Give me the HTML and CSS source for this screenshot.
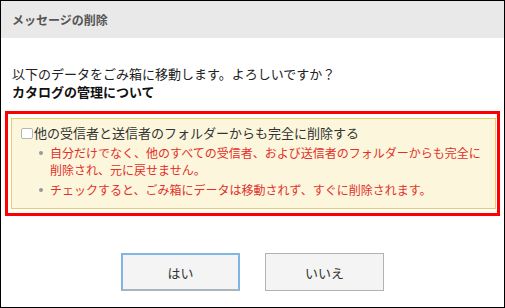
FILE: index.html
```html
<!DOCTYPE html>
<html lang="ja">
<head>
<meta charset="utf-8">
<title>メッセージの削除</title>
<link rel="stylesheet" href="styles.css">
</head>
<body>
<div class="dialog">
  <div class="header">メッセージの削除</div>
  <div class="content">
    <p class="msg">以下のデータをごみ箱に移動します。よろしいですか？<br><b>カタログの管理について</b></p>
    <div class="warn-frame">
      <div class="warn">
        <label class="check"><span class="box"></span>他の受信者と送信者のフォルダーからも完全に削除する</label>
        <ul class="notes">
          <li>自分だけでなく、他のすべての受信者、および送信者のフォルダーからも完全に削除され、元に戻せません。</li>
          <li>チェックすると、ごみ箱にデータは移動されず、すぐに削除されます。</li>
        </ul>
      </div>
    </div>
  </div>
  <div class="actions">
    <button class="btn btn-focus">はい</button>
    <button class="btn">いいえ</button>
  </div>
</div>
</body>
</html>
```
FILE: styles.css
```css
html, body {
  margin: 0;
  padding: 0;
  background: #fff;
}
body {
  font-family: "Noto Sans CJK JP", "Noto Sans", sans-serif;
  color: #333;
}
.dialog {
  box-sizing: border-box;
  width: 505px;
  height: 308px;
  border: 1px solid #000;
  display: flex;
  flex-direction: column;
}
.header {
  height: 37px;
  background: #e9e9e9;
  color: #555;
  font-size: 12px;
  font-weight: bold;
  line-height: 37px;
  padding-left: 11px;
}
.content {
  padding-top: 27px;
}
.msg {
  margin: 0 0 10px 11px;
  font-size: 13px;
  line-height: 18px;
  color: #222;
}
.msg b {
  color: #111;
}
.warn-frame {
  margin: 0 4px;
  border: 3px solid #ff0000;
  padding: 4px 1px 4px 3px;
}
.warn {
  background: #fcf7dc;
  border: 1px solid #e4cd6a;
  padding: 5px 0 10px 0;
}
.check {
  display: flex;
  align-items: center;
  padding-left: 9px;
  font-size: 13px;
  line-height: 18px;
  color: #333;
}
.box {
  flex: none;
  box-sizing: border-box;
  width: 12px;
  height: 11px;
  border: 1px solid #b5b5b5;
  border-radius: 2px;
  background: #fff;
  margin-right: 1px;
  margin-top: 1px;
}
.notes {
  list-style: none;
  margin: 2px 0 0 0;
  padding: 0 8px 0 27px;
}
.notes li {
  display: flex;
  font-size: 12px;
  line-height: 17px;
  color: #e2302a;
  margin-bottom: 3px;
}
.notes li:last-child {
  margin-bottom: 0;
}
.notes li::before {
  content: "";
  flex: none;
  width: 4px;
  height: 4px;
  border-radius: 50%;
  background: #999;
  margin: 7px 7px 0 0;
}
.actions {
  display: flex;
  justify-content: center;
  gap: 25px;
  margin-top: 37px;
}
.btn {
  box-sizing: border-box;
  width: 119px;
  height: 38px;
  background: #f4f4f4;
  border: 1px solid #b3b3b3;
  font-family: "Noto Sans CJK JP", "Noto Sans", sans-serif;
  font-size: 13px;
  color: #333;
  padding: 0;
}
.btn-focus {
  border: 2px solid #7fb6e5;
  border-bottom-color: #a9b4bd;
}
```
